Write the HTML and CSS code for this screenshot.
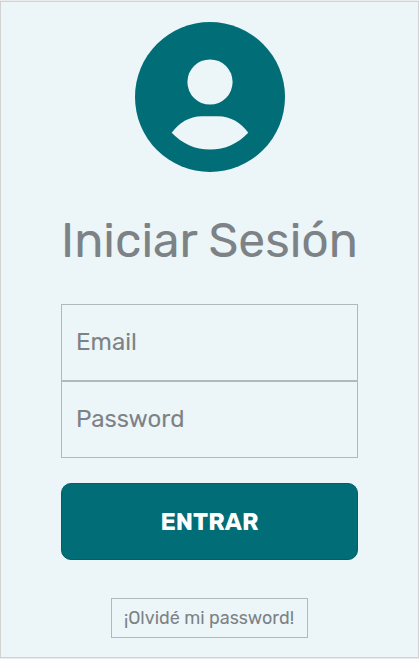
FILE: index.html
```html
<!DOCTYPE html>
<html lang="es">
<head>
  <meta charset="utf-8">
  <meta name="viewport" content="width=device-width, initial-scale=1">
  <title>Iniciar Sesión</title>
  <link rel="stylesheet" href="styles.css">
</head>
<body>
  <main class="login">
    <svg class="avatar" viewBox="0 0 150 150" aria-hidden="true">
      <circle class="avatar-disc" cx="75" cy="75" r="75"/>
      <circle class="avatar-person" cx="75" cy="60" r="22.6"/>
      <path class="avatar-person" d="M36.7 110.7C44 101 54 94.2 67 94.2H83C96 94.2 106 101 113.3 110.7C103 121.5 90 127.6 75 127.6S47 121.5 36.7 110.7Z"/>
    </svg>
    <h1 class="title">Iniciar Sesión</h1>
    <form class="form">
      <input class="field" type="email" placeholder="Email" aria-label="Email">
      <input class="field" type="password" placeholder="Password" aria-label="Password">
      <button class="submit" type="submit">ENTRAR</button>
    </form>
    <button class="forgot" type="button">¡Olvidé mi password!</button>
  </main>
</body>
</html>
```
FILE: styles.css
```css
* {
  box-sizing: border-box;
}

body {
  margin: 0;
  padding: 1px 0;
  background: #ebebeb;
  font-family: Rubik, Roboto, sans-serif;
  color: #7c8285;
}

.login {
  display: flex;
  flex-direction: column;
  align-items: center;
  min-height: calc(100vh - 2px);
  padding: 20px 60px 19px;
  border: 1px solid #d2d2d2;
  background: #ecf5f8;
}

.avatar {
  width: 150px;
  height: 150px;
}

.avatar-disc {
  fill: #006d77;
}

.avatar-person {
  fill: #ecf5f8;
}

.title {
  margin: 41px 0 35px;
  font-size: 48px;
  line-height: 56px;
  font-weight: 400;
  white-space: nowrap;
}

.form {
  display: flex;
  flex-direction: column;
  width: 100%;
}

.field {
  width: 100%;
  height: 77px;
  padding: 0 14px 2px;
  border: 1px solid #b0b9bc;
  border-radius: 0;
  background: transparent;
  font: inherit;
  font-size: 24px;
  color: inherit;
}

.field::placeholder {
  color: inherit;
  opacity: 1;
}

.submit {
  height: 77px;
  margin-top: 25px;
  border: 1px solid #055d65;
  border-radius: 10px;
  background: #006d77;
  font: inherit;
  font-size: 24px;
  font-weight: 700;
  color: #fff;
}

.forgot {
  height: 40px;
  margin-top: 38px;
  padding: 0 13px 0 12px;
  border: 1px solid #b0b9bc;
  background: transparent;
  font: inherit;
  font-size: 18px;
  color: inherit;
}
```
